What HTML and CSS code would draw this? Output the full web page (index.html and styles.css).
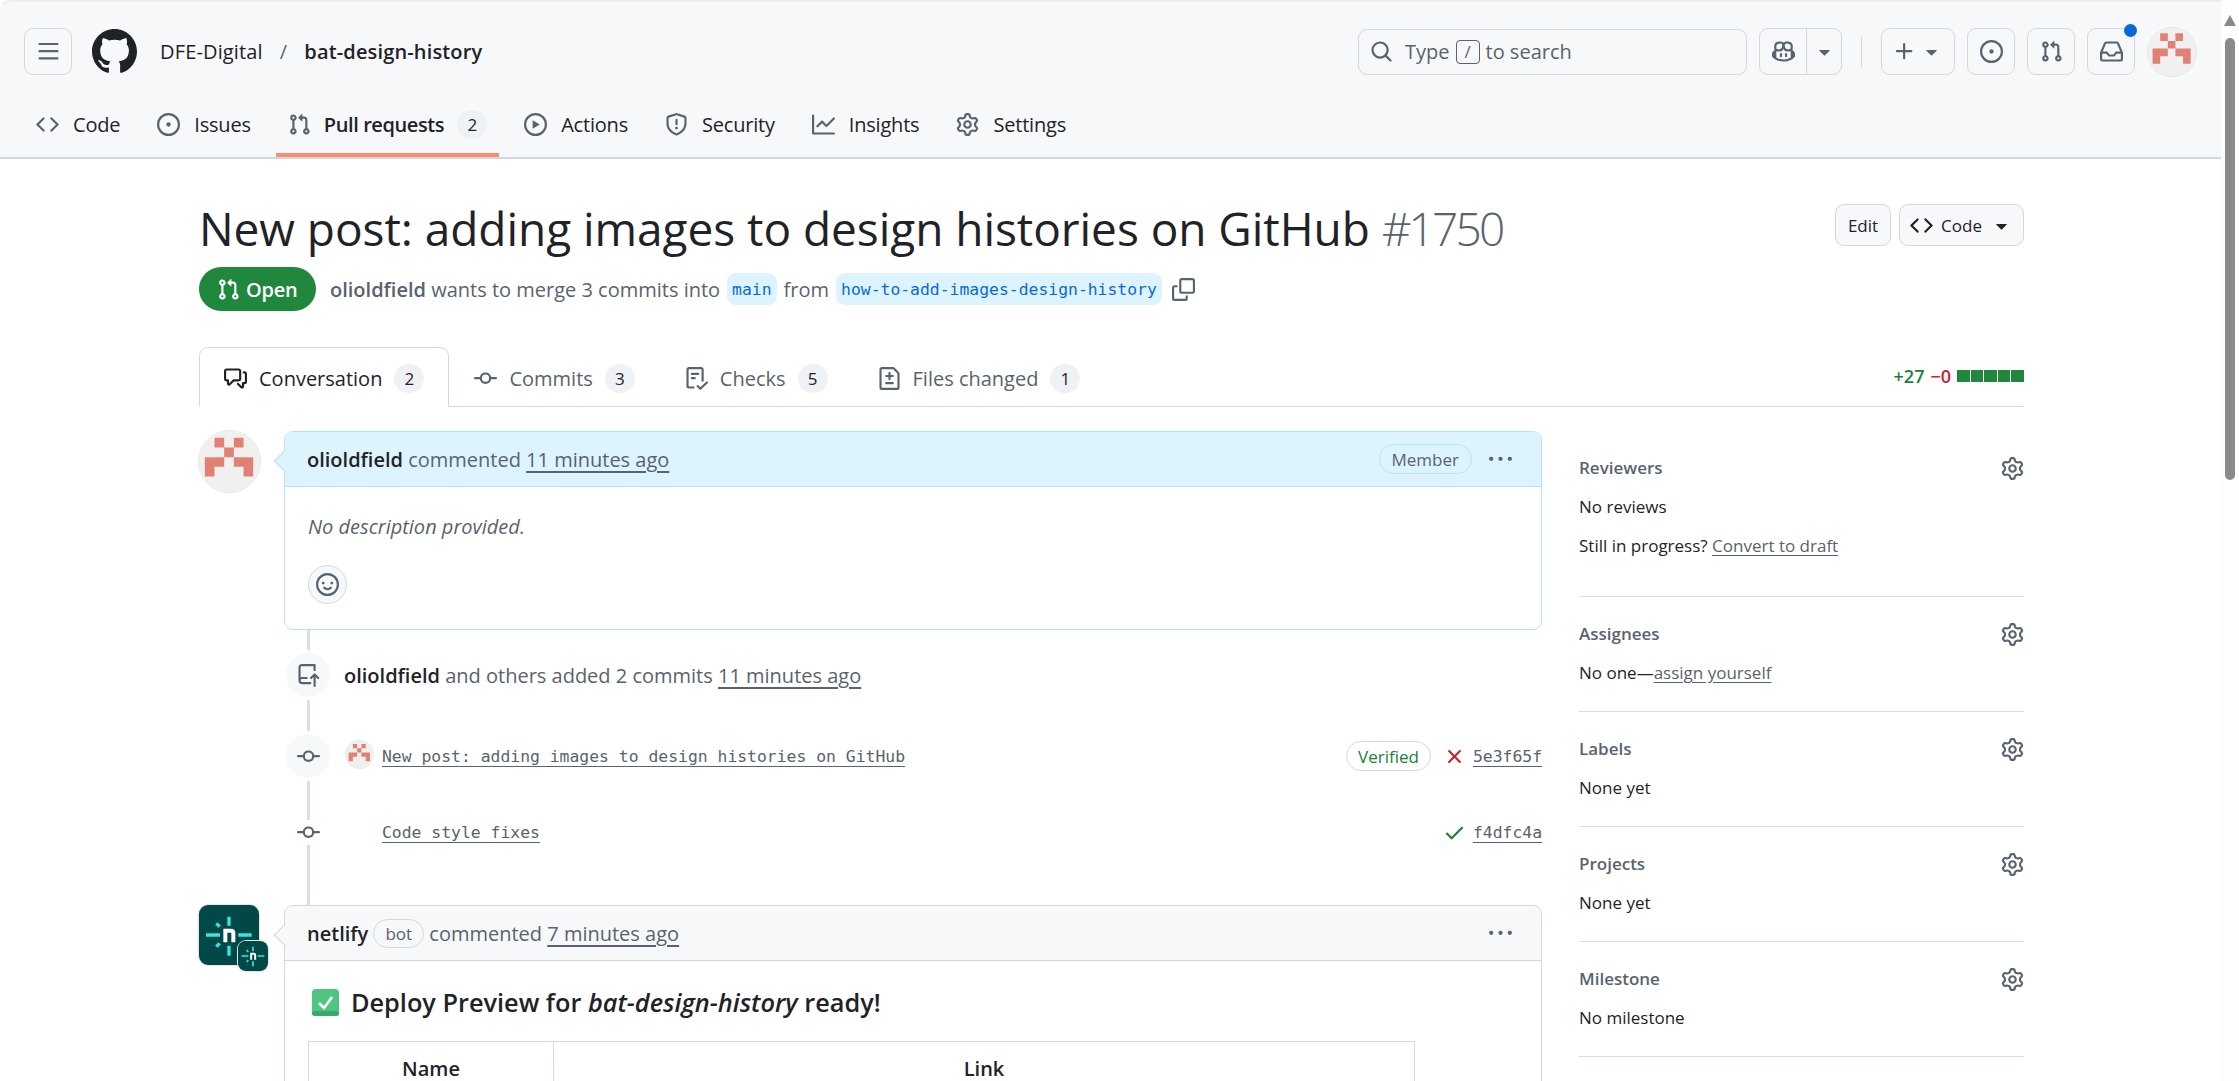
FILE: index.html
```html
<!DOCTYPE html>
<html lang="en">
<head>
    <meta charset="UTF-8">
    <title>New post: adding images to design histories on GitHub #1750</title>
    <link rel="stylesheet" href="styles.css">
</head>
<body>
    <svg class="defs" width="0" height="0">
        <symbol id="i-bars" viewBox="0 0 16 16"><path d="M1 2.75A.75.75 0 0 1 1.75 2h12.5a.75.75 0 0 1 0 1.5H1.75A.75.75 0 0 1 1 2.75Zm0 5A.75.75 0 0 1 1.75 7h12.5a.75.75 0 0 1 0 1.5H1.75A.75.75 0 0 1 1 7.75ZM1.75 12h12.5a.75.75 0 0 1 0 1.5H1.75a.75.75 0 0 1 0-1.5Z"/></symbol>
        <symbol id="i-github" viewBox="0 0 16 16"><path d="M8 0c4.42 0 8 3.58 8 8a8.013 8.013 0 0 1-5.45 7.59c-.4.08-.55-.17-.55-.38 0-.27.01-1.13.01-2.2 0-.75-.25-1.23-.54-1.48 1.78-.2 3.65-.88 3.65-3.95 0-.88-.31-1.59-.82-2.15.08-.2.36-1.02-.08-2.12 0 0-.67-.22-2.2.82-.64-.18-1.32-.27-2-.27-.68 0-1.36.09-2 .27-1.53-1.03-2.2-.82-2.2-.82-.44 1.1-.16 1.92-.08 2.12-.51.56-.82 1.28-.82 2.15 0 3.06 1.86 3.75 3.64 3.95-.23.2-.44.55-.51 1.07-.46.21-1.61.55-2.33-.66-.15-.24-.6-.83-1.23-.82-.67.01-.27.38.01.53.34.19.73.9.82 1.13.16.45.68 1.31 2.69.94 0 .67.01 1.3.01 1.49 0 .21-.15.45-.55.38A7.995 7.995 0 0 1 0 8c0-4.42 3.58-8 8-8Z"/></symbol>
        <symbol id="i-code" viewBox="0 0 16 16"><path d="m11.28 3.22 4.25 4.25a.75.75 0 0 1 0 1.06l-4.25 4.25a.749.749 0 0 1-1.275-.326.749.749 0 0 1 .215-.734L13.94 8l-3.72-3.72a.749.749 0 0 1 .326-1.275.749.749 0 0 1 .734.215Zm-6.56 0a.751.751 0 0 1 1.042.018.751.751 0 0 1 .018 1.042L2.06 8l3.72 3.72a.749.749 0 0 1-.326 1.275.749.749 0 0 1-.734-.215L.47 8.53a.75.75 0 0 1 0-1.06Z"/></symbol>
        <symbol id="i-issue" viewBox="0 0 16 16"><path d="M8 9.5a1.5 1.5 0 1 0 0-3 1.5 1.5 0 0 0 0 3Z"/><path d="M8 0a8 8 0 1 1 0 16A8 8 0 0 1 8 0ZM1.5 8a6.5 6.5 0 1 0 13 0 6.5 6.5 0 0 0-13 0Z"/></symbol>
        <symbol id="i-pr" viewBox="0 0 16 16"><path d="M1.5 3.25a2.25 2.25 0 1 1 3 2.122v5.256a2.251 2.251 0 1 1-1.5 0V5.372A2.25 2.25 0 0 1 1.5 3.25Zm5.677-.177L9.573.677A.25.25 0 0 1 10 .854V2.5h1A2.5 2.5 0 0 1 13.5 5v5.628a2.251 2.251 0 1 1-1.5 0V5a1 1 0 0 0-1-1h-1v1.646a.25.25 0 0 1-.427.177L7.177 3.427a.25.25 0 0 1 0-.354ZM3.75 2.5a.75.75 0 1 0 0 1.5.75.75 0 0 0 0-1.5Zm0 9.5a.75.75 0 1 0 0 1.5.75.75 0 0 0 0-1.5Zm8.25.75a.75.75 0 1 0 1.5 0 .75.75 0 0 0-1.5 0Z"/></symbol>
        <symbol id="i-play" viewBox="0 0 16 16"><path d="M8 0a8 8 0 1 1 0 16A8 8 0 0 1 8 0ZM1.5 8a6.5 6.5 0 1 0 13 0 6.5 6.5 0 0 0-13 0Zm4.879-2.773 4.264 2.559a.25.25 0 0 1 0 .428l-4.264 2.559A.25.25 0 0 1 6 10.559V5.442a.25.25 0 0 1 .379-.215Z"/></symbol>
        <symbol id="i-shield" viewBox="0 0 16 16"><path d="M7.467.133a1.748 1.748 0 0 1 1.066 0l5.25 1.68A1.75 1.75 0 0 1 15 3.48V7c0 1.566-.32 3.182-1.303 4.682-.983 1.498-2.585 2.813-5.032 3.855a1.697 1.697 0 0 1-1.33 0c-2.447-1.042-4.049-2.357-5.032-3.855C1.32 10.182 1 8.566 1 7V3.48a1.75 1.75 0 0 1 1.217-1.667Zm.61 1.429a.25.25 0 0 0-.153 0l-5.25 1.68a.25.25 0 0 0-.174.238V7c0 1.358.275 2.666 1.057 3.86.784 1.194 2.121 2.34 4.366 3.297a.196.196 0 0 0 .154 0c2.245-.956 3.582-2.104 4.366-3.298C13.225 9.666 13.5 8.36 13.5 7V3.48a.251.251 0 0 0-.174-.237l-5.25-1.68ZM8.75 4.75v3a.75.75 0 0 1-1.5 0v-3a.75.75 0 0 1 1.5 0ZM9 10.5a1 1 0 1 1-2 0 1 1 0 0 1 2 0Z"/></symbol>
        <symbol id="i-graph" viewBox="0 0 16 16"><path d="M1.5 1.75V13.5h13.75a.75.75 0 0 1 0 1.5H.75a.75.75 0 0 1-.75-.75V1.75a.75.75 0 0 1 1.5 0Zm14.28 2.53-5.25 5.25a.75.75 0 0 1-1.06 0L7 7.06 4.28 9.78a.751.751 0 0 1-1.042-.018.751.751 0 0 1-.018-1.042l3.25-3.25a.75.75 0 0 1 1.06 0L10 7.94l4.72-4.72a.751.751 0 0 1 1.042.018.751.751 0 0 1 .018 1.042Z"/></symbol>
        <symbol id="i-gear" viewBox="0 0 16 16"><path d="M8 0a8.2 8.2 0 0 1 .701.031C9.444.095 9.99.645 10.16 1.29l.288 1.107c.018.066.079.158.212.224.231.114.454.243.668.386.123.082.233.09.299.071l1.103-.303c.644-.176 1.392.021 1.82.63.27.385.506.792.704 1.218.315.675.111 1.422-.364 1.891l-.814.806c-.049.048-.098.147-.088.294.016.257.016.515 0 .772-.01.147.038.246.088.294l.814.806c.475.469.679 1.216.364 1.891a7.977 7.977 0 0 1-.704 1.217c-.428.61-1.176.807-1.82.63l-1.102-.302c-.067-.019-.177-.011-.3.071a5.909 5.909 0 0 1-.668.386c-.133.066-.194.158-.211.224l-.29 1.106c-.168.646-.715 1.196-1.458 1.26a8.006 8.006 0 0 1-1.402 0c-.743-.064-1.289-.614-1.458-1.26l-.289-1.106c-.018-.066-.079-.158-.212-.224a5.738 5.738 0 0 1-.668-.386c-.123-.082-.233-.09-.299-.071l-1.103.303c-.644.176-1.392-.021-1.82-.63a8.12 8.12 0 0 1-.704-1.218c-.315-.675-.111-1.422.363-1.891l.815-.806c.05-.048.098-.147.088-.294a6.214 6.214 0 0 1 0-.772c.01-.147-.038-.246-.088-.294l-.815-.806C.635 6.045.431 5.298.746 4.623a7.92 7.92 0 0 1 .704-1.217c.428-.61 1.176-.807 1.82-.63l1.102.302c.067.019.177.011.3-.071.214-.143.437-.272.668-.386.133-.066.194-.158.211-.224l.29-1.106C6.009.645 6.556.095 7.299.03 7.53.01 7.764 0 8 0Zm-.571 1.525c-.036.003-.108.036-.137.146l-.289 1.105c-.147.561-.549.967-.998 1.189-.173.086-.34.183-.5.29-.417.278-.97.423-1.529.27l-1.103-.303c-.109-.03-.175.016-.195.045-.22.312-.412.644-.573.99-.014.031-.021.11.059.19l.815.806c.411.406.562.957.53 1.456a4.709 4.709 0 0 0 0 .582c.032.499-.119 1.05-.53 1.456l-.815.806c-.081.08-.073.159-.059.19.162.346.353.677.573.989.02.03.085.076.195.046l1.102-.303c.56-.153 1.113-.008 1.53.27.161.107.328.204.501.29.447.222.85.629.997 1.189l.289 1.105c.029.109.101.143.137.146a6.6 6.6 0 0 0 1.142 0c.036-.003.108-.036.137-.146l.289-1.105c.147-.561.549-.967.998-1.189.173-.086.34-.183.5-.29.417-.278.97-.423 1.529-.27l1.103.303c.109.029.175-.016.195-.045.22-.313.411-.644.573-.99.014-.031.021-.11-.059-.19l-.815-.806c-.411-.406-.562-.957-.53-1.456a4.709 4.709 0 0 0 0-.582c-.032-.499.119-1.05.53-1.456l.815-.806c.081-.08.073-.159.059-.19a6.464 6.464 0 0 0-.573-.989c-.02-.03-.085-.076-.195-.046l-1.102.303c-.56.153-1.113.008-1.53-.27a4.44 4.44 0 0 0-.501-.29c-.447-.222-.85-.629-.997-1.189l-.289-1.105c-.029-.11-.101-.143-.137-.146a6.6 6.6 0 0 0-1.142 0ZM11 8a3 3 0 1 1-6 0 3 3 0 0 1 6 0ZM9.5 8a1.5 1.5 0 1 0-3.001.001A1.5 1.5 0 0 0 9.5 8Z"/></symbol>
        <symbol id="i-search" viewBox="0 0 16 16"><path d="M10.68 11.74a6 6 0 0 1-7.922-8.982 6 6 0 0 1 8.982 7.922l3.04 3.04a.749.749 0 0 1-.326 1.275.749.749 0 0 1-.734-.215ZM11.5 7a4.499 4.499 0 1 0-8.997 0A4.499 4.499 0 0 0 11.5 7Z"/></symbol>
        <symbol id="i-copilot" viewBox="0 0 16 16"><path d="M7.998 15.035c-4.562 0-7.873-2.914-7.998-3.749V9.338c.085-.628.677-1.686 1.588-2.065.013-.07.024-.143.036-.218.029-.183.06-.384.126-.612-.201-.508-.254-1.084-.254-1.656 0-.87.128-1.769.693-2.484.579-.733 1.494-1.124 2.724-1.261 1.206-.134 2.262.034 2.944.765.05.053.096.108.139.165.044-.057.094-.112.143-.165.682-.731 1.738-.899 2.944-.765 1.23.137 2.145.528 2.724 1.261.566.715.693 1.614.693 2.484 0 .572-.053 1.148-.254 1.656.066.228.098.429.126.612.012.076.024.148.037.218.924.385 1.522 1.471 1.591 2.095v1.872c0 .766-3.351 3.795-8.002 3.795Zm0-1.485c2.28 0 4.584-1.11 5.002-1.433V7.862l-.023-.116c-.49.21-1.075.291-1.727.291-1.146 0-2.059-.327-2.71-.991A3.222 3.222 0 0 1 8 6.303a3.24 3.24 0 0 1-.544.743c-.65.664-1.563.991-2.71.991-.652 0-1.236-.081-1.727-.291l-.023.116v4.255c.419.323 2.722 1.433 5.002 1.433ZM6.762 2.83c-.193-.206-.637-.413-1.682-.297-1.019.113-1.479.404-1.713.7-.247.312-.369.789-.369 1.554 0 .793.129 1.171.308 1.371.162.181.519.379 1.442.379.853 0 1.339-.235 1.638-.54.315-.322.527-.827.617-1.553.117-.935-.037-1.395-.241-1.614Zm4.155-.297c-1.044-.116-1.488.091-1.681.297-.204.219-.359.679-.242 1.614.091.726.303 1.231.618 1.553.299.305.784.54 1.638.54.922 0 1.28-.198 1.442-.379.179-.2.308-.578.308-1.371 0-.765-.123-1.242-.37-1.554-.233-.296-.693-.587-1.713-.7Z"/><path d="M6.25 9.037a.75.75 0 0 1 .75.75v1.501a.75.75 0 0 1-1.5 0V9.787a.75.75 0 0 1 .75-.75Zm4.25.75v1.501a.75.75 0 0 1-1.5 0V9.787a.75.75 0 0 1 1.5 0Z"/></symbol>
        <symbol id="i-plus" viewBox="0 0 16 16"><path d="M7.75 2a.75.75 0 0 1 .75.75V7h4.25a.75.75 0 0 1 0 1.5H8.5v4.25a.75.75 0 0 1-1.5 0V8.5H2.75a.75.75 0 0 1 0-1.5H7V2.75A.75.75 0 0 1 7.75 2Z"/></symbol>
        <symbol id="i-inbox" viewBox="0 0 16 16"><path d="M2.8 2.06A1.75 1.75 0 0 1 4.41 1h7.18c.7 0 1.333.417 1.61 1.06l2.74 6.395c.04.093.06.194.06.295v4.5A1.75 1.75 0 0 1 14.25 15H1.75A1.75 1.75 0 0 1 0 13.25v-4.5c0-.101.02-.202.06-.295Zm1.61.44a.25.25 0 0 0-.23.152L1.887 8H4.75a.75.75 0 0 1 .6.3L6.625 10h2.75l1.275-1.7a.75.75 0 0 1 .6-.3h2.863L11.82 2.652a.25.25 0 0 0-.23-.152Zm10.09 7h-2.875l-1.275 1.7a.75.75 0 0 1-.6.3h-3.5a.75.75 0 0 1-.6-.3L4.375 9.5H1.5v3.75c0 .138.112.25.25.25h12.5a.25.25 0 0 0 .25-.25Z"/></symbol>
        <symbol id="i-caret" viewBox="0 0 16 16"><path d="m4.427 7.427 3.396 3.396a.25.25 0 0 0 .354 0l3.396-3.396A.25.25 0 0 0 11.396 7H4.604a.25.25 0 0 0-.177.427Z"/></symbol>
        <symbol id="i-copy" viewBox="0 0 16 16"><path d="M0 6.75C0 5.784.784 5 1.75 5h1.5a.75.75 0 0 1 0 1.5h-1.5a.25.25 0 0 0-.25.25v7.5c0 .138.112.25.25.25h7.5a.25.25 0 0 0 .25-.25v-1.5a.75.75 0 0 1 1.5 0v1.5A1.75 1.75 0 0 1 9.25 16h-7.5A1.75 1.75 0 0 1 0 14.25Z"/><path d="M5 1.75C5 .784 5.784 0 6.75 0h7.5C15.216 0 16 .784 16 1.75v7.5A1.75 1.75 0 0 1 14.25 11h-7.5A1.75 1.75 0 0 1 5 9.25Zm1.75-.25a.25.25 0 0 0-.25.25v7.5c0 .138.112.25.25.25h7.5a.25.25 0 0 0 .25-.25v-7.5a.25.25 0 0 0-.25-.25Z"/></symbol>
        <symbol id="i-discussion" viewBox="0 0 16 16"><path d="M1.75 1h8.5c.966 0 1.75.784 1.75 1.75v5.5A1.75 1.75 0 0 1 10.25 10H7.061l-2.574 2.573A1.458 1.458 0 0 1 2 11.543V10h-.25A1.75 1.75 0 0 1 0 8.25v-5.5C0 1.784.784 1 1.75 1ZM1.5 2.75v5.5c0 .138.112.25.25.25h1a.75.75 0 0 1 .75.75v2.19l2.72-2.72a.749.749 0 0 1 .53-.22h3.5a.25.25 0 0 0 .25-.25v-5.5a.25.25 0 0 0-.25-.25h-8.5a.25.25 0 0 0-.25.25Zm13 2a.25.25 0 0 0-.25-.25h-.5a.75.75 0 0 1 0-1.5h.5c.966 0 1.75.784 1.75 1.75v5.5A1.75 1.75 0 0 1 14.25 12H14v1.543a1.458 1.458 0 0 1-2.487 1.03L9.22 12.28a.749.749 0 0 1 .326-1.275.749.749 0 0 1 .734.215l2.22 2.22v-2.19a.75.75 0 0 1 .75-.75h1a.25.25 0 0 0 .25-.25Z"/></symbol>
        <symbol id="i-commit" viewBox="0 0 16 16"><path d="M11.93 8.5a4.002 4.002 0 0 1-7.86 0H.75a.75.75 0 0 1 0-1.5h3.32a4.002 4.002 0 0 1 7.86 0h3.32a.75.75 0 0 1 0 1.5Zm-1.43-.75a2.5 2.5 0 1 0-5 0 2.5 2.5 0 0 0 5 0Z"/></symbol>
        <symbol id="i-checklist" viewBox="0 0 16 16"><path d="M2.5 1.75v11.5c0 .138.112.25.25.25h3.17a.75.75 0 0 1 0 1.5H2.75A1.752 1.752 0 0 1 1 13.25V1.75C1 .784 1.784 0 2.75 0h8.5C12.216 0 13 .784 13 1.75v7.736a.75.75 0 0 1-1.5 0V1.75a.25.25 0 0 0-.25-.25h-8.5a.25.25 0 0 0-.25.25Zm13.274 9.537v-.001l-4.557 4.45a.75.75 0 0 1-1.055-.008l-1.943-1.95a.75.75 0 0 1 1.062-1.058l1.419 1.425 4.026-3.932a.75.75 0 1 1 1.048 1.074ZM4.75 4h4.5a.75.75 0 0 1 0 1.5h-4.5a.75.75 0 0 1 0-1.5ZM4 7.75A.75.75 0 0 1 4.75 7h2a.75.75 0 0 1 0 1.5h-2A.75.75 0 0 1 4 7.75Z"/></symbol>
        <symbol id="i-filediff" viewBox="0 0 16 16"><path d="M1 1.75C1 .784 1.784 0 2.75 0h7.586c.464 0 .909.184 1.237.513l2.914 2.914c.329.328.513.773.513 1.237v9.586A1.75 1.75 0 0 1 13.25 16H2.75A1.75 1.75 0 0 1 1 14.25Zm1.75-.25a.25.25 0 0 0-.25.25v12.5c0 .138.112.25.25.25h10.5a.25.25 0 0 0 .25-.25V4.664a.25.25 0 0 0-.073-.177l-2.914-2.914a.25.25 0 0 0-.177-.073ZM8 3.25a.75.75 0 0 1 .75.75v1.5h1.5a.75.75 0 0 1 0 1.5h-1.5v1.5a.75.75 0 0 1-1.5 0V7h-1.5a.75.75 0 0 1 0-1.5h1.5V4A.75.75 0 0 1 8 3.25Zm-3 8a.75.75 0 0 1 .75-.75h4.5a.75.75 0 0 1 0 1.5h-4.5a.75.75 0 0 1-.75-.75Z"/></symbol>
        <symbol id="i-kebab" viewBox="0 0 16 16"><path d="M8 9a1.5 1.5 0 1 0 0-3 1.5 1.5 0 0 0 0 3ZM1.5 9a1.5 1.5 0 1 0 0-3 1.5 1.5 0 0 0 0 3Zm13 0a1.5 1.5 0 1 0 0-3 1.5 1.5 0 0 0 0 3Z"/></symbol>
        <symbol id="i-smiley" viewBox="0 0 16 16"><path d="M8 0a8 8 0 1 1 0 16A8 8 0 0 1 8 0ZM1.5 8a6.5 6.5 0 1 0 13 0 6.5 6.5 0 0 0-13 0Zm3.82 1.636a.75.75 0 0 1 1.038.175l.007.009c.103.118.22.222.35.31.264.178.683.37 1.285.37.602 0 1.02-.192 1.285-.371.13-.088.247-.192.35-.31l.007-.008a.75.75 0 0 1 1.222.87l-.022-.015c.02.013.021.015.021.015v.001l-.001.002-.002.003-.005.007-.014.019a2.066 2.066 0 0 1-.184.213c-.16.166-.338.316-.53.445-.63.418-1.37.638-2.127.629-.946 0-1.652-.308-2.126-.63a3.331 3.331 0 0 1-.715-.657l-.014-.02-.005-.006-.002-.003v-.002h-.001l.613-.432-.614.43a.75.75 0 0 1 .183-1.044ZM12 7a1 1 0 1 1-2 0 1 1 0 0 1 2 0ZM5 8a1 1 0 1 1 0-2 1 1 0 0 1 0 2Zm5.25 2.25.592.416a97.71 97.71 0 0 0-.592-.416Z"/></symbol>
        <symbol id="i-push" viewBox="0 0 16 16"><path d="M1 2.5A2.5 2.5 0 0 1 3.5 0h8.75a.75.75 0 0 1 .75.75v3.5a.75.75 0 0 1-1.5 0V1.5h-8a1 1 0 0 0-1 1v6.708A2.493 2.493 0 0 1 3.5 9h3.25a.75.75 0 0 1 0 1.5H3.5a1 1 0 0 0 0 2h5.75a.75.75 0 0 1 0 1.5H3.5A2.5 2.5 0 0 1 1 11.5Zm13.23 7.79h-.001l-1.224-1.224v6.184a.75.75 0 0 1-1.5 0V9.066L10.28 10.29a.75.75 0 0 1-1.06-1.061l2.505-2.504a.75.75 0 0 1 1.06 0L15.29 9.23a.751.751 0 0 1-.018 1.042.751.751 0 0 1-1.042.018Z"/></symbol>
        <symbol id="i-x" viewBox="0 0 16 16"><path d="M3.72 3.72a.75.75 0 0 1 1.06 0L8 6.94l3.22-3.22a.749.749 0 0 1 1.275.326.749.749 0 0 1-.215.734L9.06 8l3.22 3.22a.749.749 0 0 1-.326 1.275.749.749 0 0 1-.734-.215L8 9.06l-3.22 3.22a.751.751 0 0 1-1.042-.018.751.751 0 0 1-.018-1.042L6.94 8 3.72 4.78a.75.75 0 0 1 0-1.06Z"/></symbol>
        <symbol id="i-check" viewBox="0 0 16 16"><path d="M13.78 4.22a.75.75 0 0 1 0 1.06l-7.25 7.25a.75.75 0 0 1-1.06 0L2.22 9.28a.751.751 0 0 1 .018-1.042.751.751 0 0 1 1.042-.018L6 10.94l6.72-6.72a.75.75 0 0 1 1.06 0Z"/></symbol>
        <symbol id="i-identicon" viewBox="0 0 63 63"><rect width="63" height="63" fill="#f0f0f0"/><path fill="#e08173" d="M16 7h10v10H16zM36 7h10v10H36zM26 17h10v10H26zM6 27h20v10H6zM36 27h20v10H36zM6 37h10v10H6zM46 37h10v10H46z"/></symbol>
        <symbol id="i-netlify" viewBox="0 0 180 180"><rect width="180" height="180" fill="#014847"/><path fill="none" stroke="#32e6e2" stroke-width="10" d="M90 35v27M90 122v30M21 90h42M118 90h40M52 55l10 10M52 125l10-10"/><path fill="none" stroke="#fff" stroke-width="12" d="M79 112V77h17q7 0 7 7v28"/></symbol>
    </svg>

    <div class="window">
        <div class="page">
            <header class="app-header">
                <div class="top-bar">
                    <button class="icon-btn menu-btn"><svg class="icon"><use href="#i-bars"/></svg></button>
                    <svg class="gh-logo"><use href="#i-github"/></svg>
                    <nav class="breadcrumb">
                        <a>DFE-Digital</a>
                        <span class="slash">/</span>
                        <a class="repo-name">bat-design-history</a>
                    </nav>
                    <div class="search-box">
                        <svg class="icon"><use href="#i-search"/></svg>
                        <span>Type</span>
                        <kbd class="slash-key">/</kbd>
                        <span>to search</span>
                    </div>
                    <div class="split-btn">
                        <span class="split-main"><svg class="icon"><use href="#i-copilot"/></svg></span>
                        <span class="split-caret"><svg class="icon"><use href="#i-caret"/></svg></span>
                    </div>
                    <span class="bar-divider"></span>
                    <button class="icon-btn plus-btn"><svg class="icon"><use href="#i-plus"/></svg><svg class="icon caret"><use href="#i-caret"/></svg></button>
                    <button class="icon-btn"><svg class="icon"><use href="#i-issue"/></svg></button>
                    <button class="icon-btn"><svg class="icon"><use href="#i-pr"/></svg></button>
                    <button class="icon-btn inbox-btn"><svg class="icon"><use href="#i-inbox"/></svg><span class="unread-dot"></span></button>
                    <svg class="avatar user-avatar"><use href="#i-identicon"/></svg>
                </div>
                <nav class="repo-nav">
                    <a class="nav-item"><svg class="icon"><use href="#i-code"/></svg>Code</a>
                    <a class="nav-item"><svg class="icon"><use href="#i-issue"/></svg>Issues</a>
                    <a class="nav-item active"><svg class="icon"><use href="#i-pr"/></svg>Pull requests<span class="counter">2</span></a>
                    <a class="nav-item"><svg class="icon"><use href="#i-play"/></svg>Actions</a>
                    <a class="nav-item"><svg class="icon"><use href="#i-shield"/></svg>Security</a>
                    <a class="nav-item"><svg class="icon"><use href="#i-graph"/></svg>Insights</a>
                    <a class="nav-item"><svg class="icon"><use href="#i-gear"/></svg>Settings</a>
                </nav>
            </header>

            <main class="container">
                <div class="title-row">
                    <h1 class="pr-title">New post: adding images to design histories on GitHub <span class="pr-number">#1750</span></h1>
                    <div class="title-actions">
                        <button class="btn">Edit</button>
                        <button class="btn code-btn"><svg class="icon"><use href="#i-code"/></svg>Code<svg class="icon caret"><use href="#i-caret"/></svg></button>
                    </div>
                </div>

                <div class="pr-meta">
                    <span class="state-badge"><svg class="icon"><use href="#i-pr"/></svg>Open</span>
                    <span class="meta-text"><b>olioldfield</b> wants to merge 3 commits into</span>
                    <span class="branch">main</span>
                    <span class="meta-text">from</span>
                    <span class="branch">how-to-add-images-design-history</span>
                    <svg class="icon copy-icon"><use href="#i-copy"/></svg>
                </div>

                <div class="pr-tabs">
                    <a class="pr-tab active"><svg class="icon"><use href="#i-discussion"/></svg>Conversation<span class="counter">2</span></a>
                    <a class="pr-tab"><svg class="icon"><use href="#i-commit"/></svg>Commits<span class="counter">3</span></a>
                    <a class="pr-tab"><svg class="icon"><use href="#i-checklist"/></svg>Checks<span class="counter">5</span></a>
                    <a class="pr-tab"><svg class="icon"><use href="#i-filediff"/></svg>Files changed<span class="counter">1</span></a>
                    <div class="diffstat">
                        <span class="added">+27</span>
                        <span class="removed">&minus;0</span>
                        <span class="diff-blocks"><i></i><i></i><i></i><i></i><i></i></span>
                    </div>
                </div>

                <div class="pr-layout">
                    <div class="discussion">
                        <div class="comment-item">
                            <svg class="avatar comment-avatar"><use href="#i-identicon"/></svg>
                            <div class="comment comment-author">
                                <div class="comment-header">
                                    <span><b>olioldfield</b> commented <a class="time-link">11 minutes ago</a></span>
                                    <span class="comment-tools">
                                        <span class="pill member-pill">Member</span>
                                        <svg class="icon"><use href="#i-kebab"/></svg>
                                    </span>
                                </div>
                                <div class="comment-body">
                                    <p class="no-desc">No description provided.</p>
                                    <button class="reaction-btn"><svg class="icon"><use href="#i-smiley"/></svg></button>
                                </div>
                            </div>
                        </div>

                        <div class="rail">
                            <div class="rail-row">
                                <span class="rail-badge"><svg class="icon"><use href="#i-push"/></svg></span>
                                <span class="event-text"><b>olioldfield</b> and others added 2 commits <a class="time-link">11 minutes ago</a></span>
                            </div>
                            <div class="rail-row commit-row">
                                <span class="rail-badge"><svg class="icon"><use href="#i-commit"/></svg></span>
                                <svg class="avatar mini-avatar"><use href="#i-identicon"/></svg>
                                <a class="commit-msg">New post: adding images to design histories on GitHub</a>
                                <span class="commit-side">
                                    <span class="pill verified-pill">Verified</span>
                                    <svg class="icon status-fail"><use href="#i-x"/></svg>
                                    <a class="commit-sha">5e3f65f</a>
                                </span>
                            </div>
                            <div class="rail-row commit-row plain">
                                <span class="rail-badge"><svg class="icon"><use href="#i-commit"/></svg></span>
                                <span class="mini-avatar"></span>
                                <a class="commit-msg">Code style fixes</a>
                                <span class="commit-side">
                                    <svg class="icon status-ok"><use href="#i-check"/></svg>
                                    <a class="commit-sha">f4dfc4a</a>
                                </span>
                            </div>
                        </div>

                        <div class="comment-item">
                            <div class="bot-avatar">
                                <svg class="bot-main"><use href="#i-netlify"/></svg>
                                <svg class="bot-mini"><use href="#i-netlify"/></svg>
                            </div>
                            <div class="comment">
                                <div class="comment-header">
                                    <span><b>netlify</b> <span class="pill bot-pill">bot</span> commented <a class="time-link">7 minutes ago</a></span>
                                    <span class="comment-tools"><svg class="icon"><use href="#i-kebab"/></svg></span>
                                </div>
                                <div class="comment-body">
                                    <h3 class="deploy-title">
                                        <svg class="check-emoji" viewBox="0 0 27 27"><rect width="27" height="27" rx="4" fill="#4fc581"/><rect y="22" width="27" height="5" rx="3" fill="#3aa868"/><path d="M7 14l5 5 8-11" fill="none" stroke="#fff" stroke-width="2.6"/></svg>
                                        <span>Deploy Preview for <em>bat-design-history</em> ready!</span>
                                    </h3>
                                    <table class="deploy-table">
                                        <tr><th class="col-name">Name</th><th>Link</th></tr>
                                    </table>
                                </div>
                            </div>
                        </div>
                    </div>

                    <aside class="sidebar">
                        <section class="side-item first">
                            <div class="side-head">Reviewers<svg class="icon"><use href="#i-gear"/></svg></div>
                            <p>No reviews</p>
                            <p class="tight">Still in progress? <a class="muted-link">Convert to draft</a></p>
                        </section>
                        <section class="side-item">
                            <div class="side-head">Assignees<svg class="icon"><use href="#i-gear"/></svg></div>
                            <p>No one&mdash;<a class="muted-link">assign yourself</a></p>
                        </section>
                        <section class="side-item">
                            <div class="side-head">Labels<svg class="icon"><use href="#i-gear"/></svg></div>
                            <p>None yet</p>
                        </section>
                        <section class="side-item">
                            <div class="side-head">Projects<svg class="icon"><use href="#i-gear"/></svg></div>
                            <p>None yet</p>
                        </section>
                        <section class="side-item">
                            <div class="side-head">Milestone<svg class="icon"><use href="#i-gear"/></svg></div>
                            <p>No milestone</p>
                        </section>
                        <section class="side-item">
                            <div class="side-head">Development<svg class="icon"><use href="#i-gear"/></svg></div>
                        </section>
                    </aside>
                </div>
            </main>
        </div>

        <div class="scrollbar">
            <span class="scroll-up"></span>
            <span class="scroll-thumb"></span>
        </div>
    </div>
</body>
</html>
```

FILE: styles.css
```css
* {
    box-sizing: border-box;
}

html, body {
    margin: 0;
    padding: 0;
    height: 1081px;
    overflow: hidden;
}

body {
    font-family: "Open Sans", "Noto Sans", sans-serif;
    font-size: 20px;
    color: #1f2328;
    background-color: #fff;
}

button {
    font: inherit;
    color: inherit;
}

.defs {
    position: absolute;
}

.icon {
    width: 23px;
    height: 23px;
    fill: currentColor;
    flex-shrink: 0;
}

.window {
    display: flex;
    height: 1081px;
}

.page {
    flex: 1;
    min-width: 0;
    overflow: hidden;
}

.avatar {
    border: 1px solid #e2e4e6;
    border-radius: 50%;
    flex-shrink: 0;
}

/* header */
.app-header {
    height: 159px;
    background-color: #f6f8fa;
    border-top: 2px solid #ececec;
    border-bottom: 2px solid #d1d9e0;
    border-top-left-radius: 10px;
}

.top-bar {
    display: flex;
    align-items: center;
    height: 47px;
    margin-top: 26px;
    padding: 0 24px;
    color: #59636e;
}

.icon-btn {
    display: flex;
    align-items: center;
    justify-content: center;
    width: 48px;
    height: 47px;
    margin-left: 12px;
    padding: 0;
    background: transparent;
    border: 1px solid #d1d9e0;
    border-radius: 9px;
}

.menu-btn {
    margin-left: 0;
}

.plus-btn {
    width: 74px;
    margin-left: 19px;
    gap: 4px;
}

.gh-logo {
    width: 45px;
    height: 45px;
    margin-left: 20px;
    fill: #1f2328;
}

.breadcrumb {
    display: flex;
    align-items: center;
    margin-left: 23px;
    color: #1f2328;
    letter-spacing: 0.15px;
}

.slash {
    margin: 0 17px;
    color: #59636e;
}

.repo-name {
    font-weight: 600;
}

.search-box {
    display: flex;
    align-items: center;
    gap: 6px;
    width: 389px;
    height: 46px;
    margin-left: auto;
    padding: 0 11px;
    border: 1px solid #d1d9e0;
    border-radius: 9px;
}

.search-box .icon {
    margin-right: 6px;
}

.slash-key {
    display: flex;
    align-items: center;
    justify-content: center;
    width: 24px;
    height: 24px;
    font-family: inherit;
    font-size: 17px;
    border: 1px solid #59636e;
    border-radius: 4px;
}

.split-btn {
    display: flex;
    width: 83px;
    height: 47px;
    margin-left: 12px;
    border: 1px solid #d1d9e0;
    border-radius: 9px;
}

.split-main {
    display: flex;
    align-items: center;
    justify-content: center;
    width: 47px;
    border-right: 1px solid #d1d9e0;
}

.split-caret {
    display: flex;
    align-items: center;
    justify-content: center;
    flex: 1;
}

.bar-divider {
    width: 1px;
    height: 30px;
    margin-left: 19px;
    background-color: #d1d9e0;
}

.inbox-btn {
    position: relative;
}

.unread-dot {
    position: absolute;
    top: -5px;
    right: -3px;
    width: 13px;
    height: 13px;
    background-color: #0969da;
    border-radius: 50%;
}

.user-avatar {
    width: 50px;
    height: 50px;
    margin-left: 12px;
}

.repo-nav {
    display: flex;
    gap: 13px;
    height: 59px;
    margin-top: 23px;
    padding-left: 24px;
}

.nav-item {
    display: flex;
    align-items: center;
    gap: 14px;
    height: 59px;
    padding: 0 12px;
    padding-bottom: 7px;
    letter-spacing: -0.2px;
}

.nav-item .icon {
    color: #59636e;
}

.nav-item.active {
    gap: 13px;
    font-weight: 600;
    letter-spacing: -0.4px;
    border-bottom: 4px solid #fd8c73;
    padding-bottom: 3px;
}

.counter {
    display: inline-flex;
    align-items: center;
    justify-content: center;
    width: 30px;
    height: 29px;
    font-size: 17px;
    font-weight: 500;
    color: #1f2328;
    background-color: #eff2f5;
    border-radius: 15px;
}

/* title */
.container {
    width: 1825px;
    margin-left: 199px;
    padding-top: 41px;
}

.title-row {
    display: flex;
    justify-content: space-between;
    align-items: flex-start;
}

.pr-title {
    margin: 0;
    font-size: 46px;
    font-weight: 400;
    line-height: 57px;
    letter-spacing: -0.05px;
}

.pr-number {
    font-weight: 300;
    letter-spacing: -2.8px;
    color: #59636e;
}

.title-actions {
    display: flex;
    gap: 8px;
    margin-top: 4px;
}

.btn {
    display: flex;
    align-items: center;
    height: 42px;
    padding: 0 12px;
    font-size: 17px;
    font-weight: 500;
    background-color: #f6f8fa;
    border: 1px solid #d1d9e0;
    border-radius: 9px;
}

.code-btn {
    gap: 8px;
    padding: 0 10px;
}

.pr-meta {
    display: flex;
    align-items: center;
    gap: 7px;
    height: 44px;
    margin-top: 10px;
    color: #59636e;
}

.state-badge {
    display: flex;
    align-items: center;
    gap: 6px;
    width: 117px;
    height: 44px;
    margin-right: 7px;
    padding-left: 18px;
    font-weight: 600;
    letter-spacing: -0.25px;
    color: #fff;
    background-color: #1f883d;
    border-radius: 22px;
}

.meta-text b {
    font-weight: 600;
}

.branch {
    display: flex;
    align-items: center;
    height: 32px;
    padding: 0 5px;
    font-family: "DejaVu Sans Mono", monospace;
    font-size: 16.4px;
    color: #0969da;
    background-color: #ddf4ff;
    border-radius: 9px;
}

.copy-icon {
    margin-left: 3px;
}

/* tabs */
.pr-tabs {
    display: flex;
    align-items: flex-end;
    height: 60px;
    margin-top: 36px;
    border-bottom: 1px solid #d1d9e0;
}

.pr-tab {
    display: flex;
    align-items: center;
    gap: 12px;
    height: 60px;
    margin-bottom: -1px;
    padding: 2px 24px 0;
    color: #59636e;
    border: 1px solid transparent;
}

.pr-tab.active {
    color: #1f2328;
    background-color: #fff;
    border-color: #d1d9e0;
    border-bottom-color: #fff;
    border-radius: 9px 9px 0 0;
}

.diffstat {
    display: flex;
    align-items: center;
    gap: 6px;
    height: 60px;
    margin-left: auto;
    font-size: 18px;
    font-weight: 600;
}

.added {
    color: #1a7f37;
}

.removed {
    color: #cf222e;
}

.diff-blocks {
    display: flex;
    gap: 1px;
}

.diff-blocks i {
    width: 12.6px;
    height: 12px;
    background-color: #1f883d;
}

/* discussion */
.pr-layout {
    display: flex;
    gap: 37px;
    padding-top: 24px;
}

.discussion {
    width: 1343px;
    flex-shrink: 0;
}

.comment-item {
    display: flex;
    gap: 23px;
}

.comment-avatar {
    width: 63px;
    height: 63px;
    margin: -1px 0 0 -1px;
}

.comment {
    position: relative;
    flex: 1;
    min-width: 0;
    border: 1px solid #d1d9e0;
    border-radius: 9px;
}

.comment::before {
    content: "";
    position: absolute;
    top: 21px;
    left: -8px;
    width: 15px;
    height: 15px;
    background-color: #f6f8fa;
    border-left: 1px solid #d1d9e0;
    border-bottom: 1px solid #d1d9e0;
    transform: rotate(45deg);
}

.comment-author {
    border-color: #b6e3ff;
}

.comment-author::before {
    background-color: #ddf4ff;
    border-color: #b6e3ff;
}

.comment-header {
    display: flex;
    align-items: center;
    justify-content: space-between;
    height: 55px;
    padding: 0 29px 0 22px;
    color: #59636e;
    background-color: #f6f8fa;
    border-bottom: 1px solid #d1d9e0;
    border-radius: 9px 9px 0 0;
}

.comment-author .comment-header {
    background-color: #ddf4ff;
    border-bottom-color: #b6e3ff;
}

.comment-header b, .event-text b {
    font-weight: 600;
    color: #1f2328;
}

.time-link {
    color: #59636e;
    text-decoration: underline;
    text-decoration-thickness: 1.5px;
    text-underline-offset: 4px;
}

.comment-tools {
    display: flex;
    align-items: center;
    gap: 17px;
    position: relative;
    z-index: 1;
}

.pill {
    display: inline-flex;
    align-items: center;
    height: 30px;
    padding: 0 11px;
    font-size: 17px;
    font-weight: 500;
    color: #59636e;
    border: 1px solid #d1d9e0;
    border-radius: 15px;
}

.member-pill {
    padding: 0 12px;
    border-color: #b6e3ff;
}

.comment-body {
    padding: 26px 23px 23px;
}

.no-desc {
    margin: 0;
    line-height: 28px;
    font-style: italic;
    color: #59636e;
}

.reaction-btn {
    display: flex;
    align-items: center;
    justify-content: center;
    width: 39px;
    height: 39px;
    margin-top: 24px;
    margin-bottom: 2px;
    padding: 0;
    color: #59636e;
    background-color: #f6f8fa;
    border: 1px solid #d1d9e0;
    border-radius: 50%;
}

/* commit rail */
.rail {
    margin-left: 108px;
    padding-top: 24px;
    padding-bottom: 60px;
    border-left: 3px solid #d8dee4;
}

.rail-row {
    display: flex;
    align-items: center;
    height: 42px;
    margin-left: -24px;
}

.commit-row {
    margin-top: 39px;
}

.commit-row.plain {
    height: 25px;
    margin-top: 43px;
}

.rail-badge {
    display: flex;
    align-items: center;
    justify-content: center;
    flex-shrink: 0;
    width: 44px;
    height: 44px;
    color: #59636e;
    background-color: #f6f8fa;
    border-radius: 50%;
    box-shadow: 0 0 0 3px #fff;
}

.plain .rail-badge {
    height: 25px;
    background-color: #fff;
    border-radius: 0;
    box-shadow: none;
}

.event-text {
    margin-left: 14px;
    color: #59636e;
}

.mini-avatar {
    width: 29px;
    height: 29px;
    margin: -3px 0 0 15px;
    flex-shrink: 0;
}

.commit-msg, .commit-sha {
    font-family: "DejaVu Sans Mono", monospace;
    font-size: 16.4px;
    color: #59636e;
    text-decoration: underline;
    text-underline-offset: 4px;
}

.commit-msg {
    margin-left: 8px;
}

.commit-side {
    display: flex;
    align-items: center;
    margin-left: auto;
}

.verified-pill {
    margin-right: 12px;
    color: #1a7f37;
}

.status-fail {
    margin-right: 7px;
    color: #cf222e;
}

.status-ok {
    margin-right: 7px;
    color: #1a7f37;
}

/* netlify comment */
.bot-avatar {
    position: relative;
    flex-shrink: 0;
    width: 62px;
    height: 63px;
}

.bot-main {
    display: block;
    width: 60px;
    height: 60px;
    border-radius: 9px;
    box-shadow: 0 0 0 1px #e2e4e6;
}

.bot-mini {
    position: absolute;
    top: 36px;
    left: 39px;
    width: 30px;
    height: 30px;
    border-radius: 8px;
    box-shadow: 0 0 0 1px #e2e4e6;
}

.bot-pill {
    height: 29px;
    vertical-align: 1px;
}

.deploy-title {
    display: flex;
    align-items: center;
    gap: 12px;
    margin: -3px 0 0;
    padding-left: 4px;
    font-size: 25.3px;
    font-weight: 600;
    line-height: 36px;
}

.check-emoji {
    width: 27px;
    height: 27px;
    flex-shrink: 0;
}

.deploy-table {
    width: 1107px;
    margin-top: 21px;
    border-collapse: collapse;
    font-weight: 600;
}

.deploy-table th {
    height: 54px;
    font-weight: 600;
    border: 1px solid #d1d9e0;
}

.col-name {
    width: 245px;
}

/* sidebar */
.sidebar {
    flex: 1;
    min-width: 0;
    font-size: 17px;
}

.side-item {
    height: 115px;
    padding-top: 23px;
    border-top: 1px solid #d8dee4;
}

.side-item.first {
    height: 165px;
    border-top: none;
}

.side-head {
    display: flex;
    align-items: center;
    justify-content: space-between;
    height: 27px;
    font-weight: 600;
    color: #59636e;
}

.side-head .icon {
    margin-top: 2px;
}

.side-item p {
    margin: 12px 0 0;
    line-height: 28px;
}

.side-item p.tight {
    margin-top: 11px;
}

.muted-link {
    color: #59636e;
    text-decoration: underline;
    text-underline-offset: 3px;
}

/* scrollbar */
.scrollbar {
    display: flex;
    flex-direction: column;
    align-items: center;
    width: 18px;
    background-color: #fdfdfd;
}

.scroll-up {
    width: 0;
    height: 0;
    margin-top: 15px;
    border-left: 6px solid transparent;
    border-right: 6px solid transparent;
    border-bottom: 11px solid #8a8a8a;
}

.scroll-thumb {
    width: 10px;
    height: 442px;
    margin-top: 12px;
    background-color: #8a8a8a;
    border-radius: 5px;
}
```
